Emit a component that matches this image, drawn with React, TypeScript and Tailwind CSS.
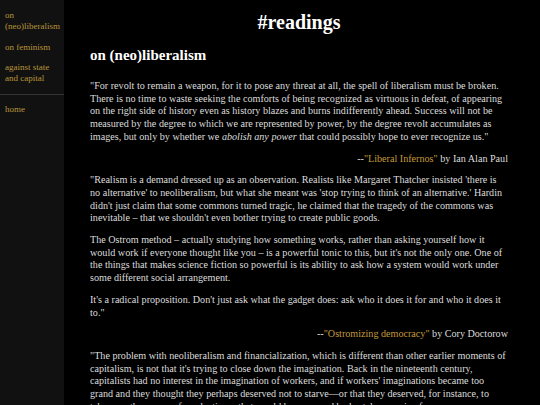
import React from 'react';

const navLinks = ['on (neo)liberalism', 'on feminism', 'against state and capital'];

const Attribution: React.FC<{ title: string; author: string }> = ({ title, author }) => (
  <p className="text-right mb-[9px]">
    --<a className="text-[#c49a3c]">"{title}"</a> by {author}
  </p>
);

const App: React.FC = () => {
  return (
    <div className="flex min-h-screen bg-black">
      <aside className="w-[64px] shrink-0 bg-[#111111] text-[#b8953a] text-[9px] leading-[11px] font-['Liberation_Serif',serif]">
        <nav className="flex flex-col gap-[9.5px] px-[5px] pt-[10px] pb-[9.5px]">
          {navLinks.map((l) => (
            <a key={l}>{l}</a>
          ))}
        </nav>
        <div className="border-t border-[#333333]" />
        <div className="px-[5px] pt-[9.5px]">
          <a>home</a>
        </div>
      </aside>

      <main className="flex-1 pl-[26px] text-[#dddddd] font-['Liberation_Serif',serif] text-[10.15px] leading-[12.7px]">
        <div className="w-[418px]">
          <h1 className="text-center text-white font-bold text-[20px] leading-[24px] pt-[10px] pb-[12px]">#readings</h1>
          <h2 className="text-white font-bold text-[15px] leading-[18px] mb-[16px]">on (neo)liberalism</h2>

          <p className="mb-[9px]">
            "For revolt to remain a weapon, for it to pose any threat at all, the spell of liberalism must be broken. There is no time to waste seeking the comforts of being recognized as virtuous in defeat, of appearing on the right side of history even as history blazes and burns indifferently ahead. Success will not be measured by the degree to which we are represented by power, by the degree revolt accumulates as images, but only by whether we <em>abolish any power</em> that could possibly hope to ever recognize us."
          </p>
          <Attribution title="Liberal Infernos" author="Ian Alan Paul" />

          <p className="mb-[9px]">
            "Realism is a demand dressed up as an observation. Realists like Margaret Thatcher insisted 'there is no alternative' to neoliberalism, but what she meant was 'stop trying to think of an alternative.' Hardin didn't just claim that some commons turned tragic, he claimed that the tragedy of the commons was inevitable – that we shouldn't even bother trying to create public goods.
          </p>
          <p className="mb-[9px]">
            The Ostrom method – actually studying how something works, rather than asking yourself how it would work if everyone thought like you – is a powerful tonic to this, but it's not the only one. One of the things that makes science fiction so powerful is its ability to ask how a system would work under some different social arrangement.
          </p>
          <p className="mb-[9px]">
            It's a radical proposition. Don't just ask what the gadget does: ask who it does it for and who it does it to."
          </p>
          <Attribution title="Ostromizing democracy" author="Cory Doctorow" />

          <p className="mb-[9px]">
            "The problem with neoliberalism and financialization, which is different than other earlier moments of capitalism, is not that it's trying to close down the imagination. Back in the nineteenth century, capitalists had no interest in the imagination of workers, and if workers' imaginations became too grand and they thought they perhaps deserved not to starve—or that they deserved, for instance, to take over the means of production—that would be answered by brutal repressive force.
          </p>
        </div>
      </main>
    </div>
  );
};

export default App;
